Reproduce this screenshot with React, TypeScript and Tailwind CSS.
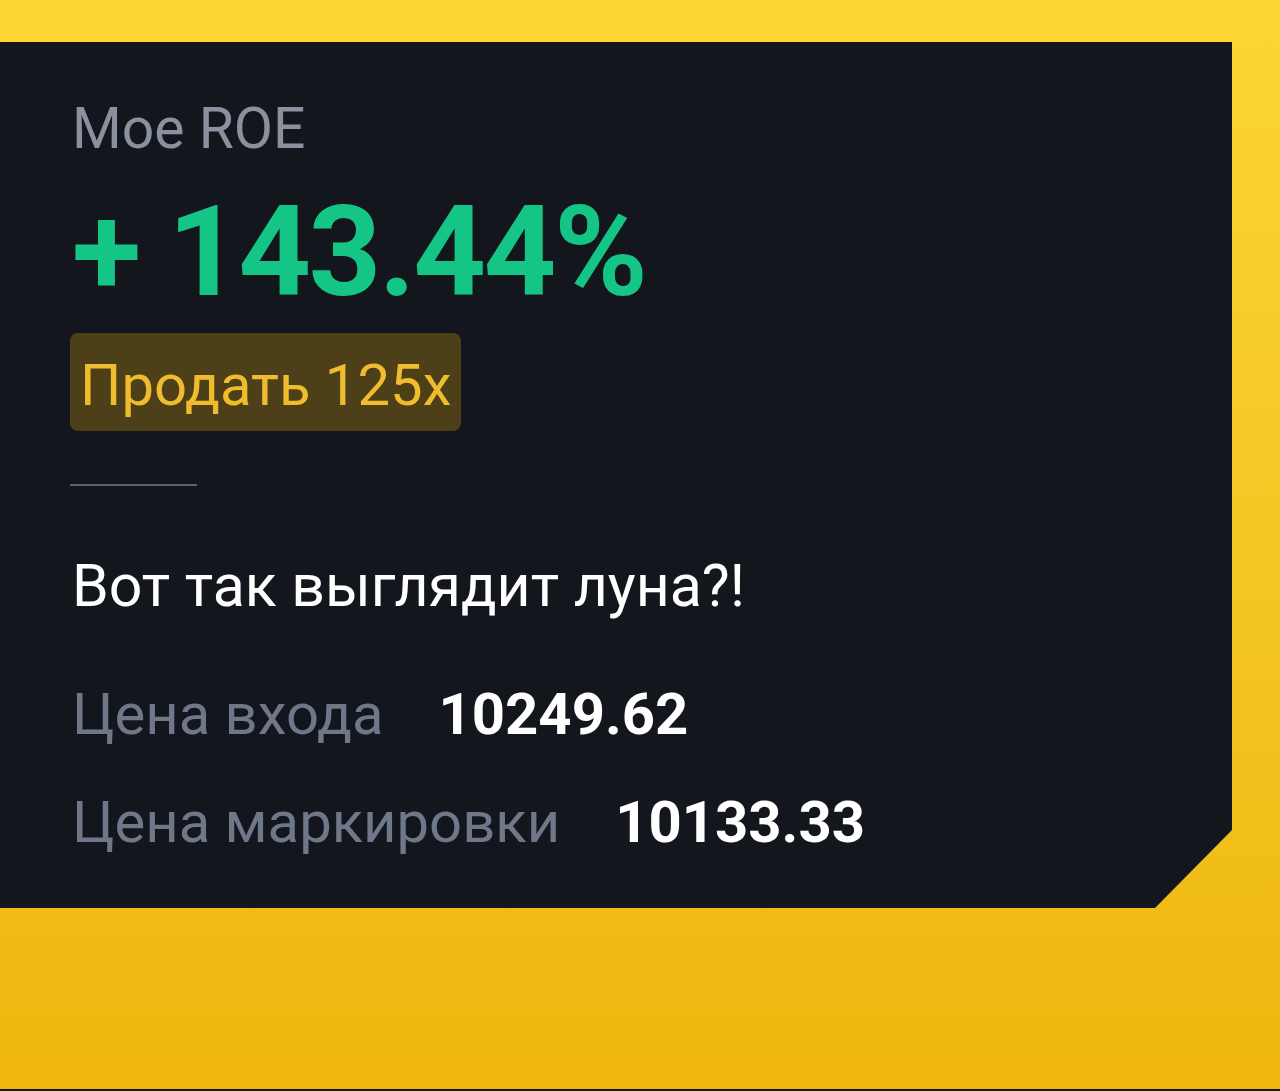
export default function App() {
  const rows = [
    { label: 'Цена входа', value: '10249.62' },
    { label: 'Цена маркировки', value: '10133.33' },
  ];

  return (
    <div className="flex h-[1091px] w-[1280px] flex-col border-b-2 border-[#1c1708] bg-gradient-to-b from-[#fad635] to-[#efb70c] pt-[42px] font-['Roboto',sans-serif]">
      <div className="h-[866px] w-[1232px] bg-[#13161d] pl-[72px] pt-[59px] [clip-path:polygon(0_0,1232px_0,1232px_788px,1155px_866px,0_866px)]">
        <div className="text-[57px] leading-[56px] text-[#8a919e]">Мое ROE</div>

        <div className="mt-[30px] text-[127px] font-bold leading-[129px] tracking-[-2.5px] text-[#15c585]">
          + 143.44%
        </div>

        <div className="-ml-[2px] mt-[17px] flex h-[98px] w-fit items-center rounded-[8px] bg-[#4d3f17] px-[10px] pt-[6px]">
          <span className="text-[58px] leading-[58px] text-[#eebc2c]">Продать 125x</span>
        </div>

        <div className="-ml-[2px] mt-[53px] h-[2px] w-[127px] bg-[#5d6470]" />

        <div className="mt-[70px] text-[59px] leading-[60px] text-white">Вот так выглядит луна?!</div>

        <div className="mt-[69px] flex flex-col gap-[50px]">
          {rows.map((row) => (
            <div key={row.label} className="flex items-baseline gap-[55px] text-[58px] leading-[58px]">
              <span className="text-[#6f7888]">{row.label}</span>
              <span className="font-bold text-white">{row.value}</span>
            </div>
          ))}
        </div>
      </div>
    </div>
  );
}
